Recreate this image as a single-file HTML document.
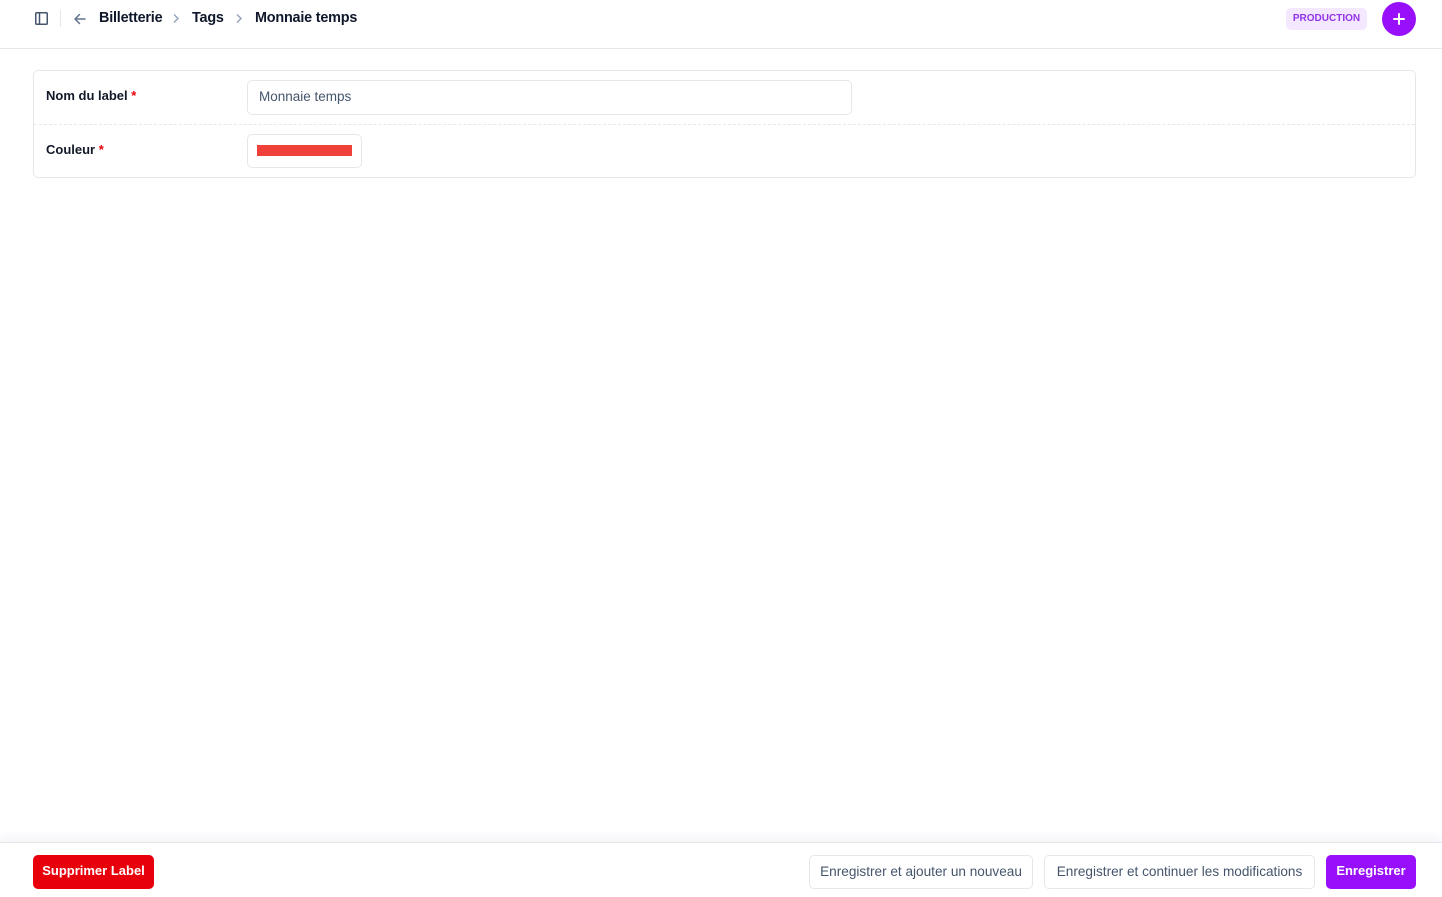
<!DOCTYPE html>
<html><head><meta charset="utf-8"><style>
*{box-sizing:border-box;margin:0;padding:0}
body{width:1442px;height:897px;background:#fff;font-family:"Liberation Sans",sans-serif;position:relative;overflow:hidden;color:#111827}
.top{position:absolute;left:0;top:0;width:1442px;height:49px;border-bottom:1px solid #e5e7eb}
.crumb{position:absolute;top:10px;font-size:14.4px;font-weight:bold;color:#0f172a;letter-spacing:-0.2px}
.chev{position:absolute;top:13px}
.badge{position:absolute;left:1286px;top:8px;width:81px;height:22px;border-radius:5px;background:#f3e8ff;color:#9333ea;font-size:10px;font-weight:bold;text-align:center;line-height:22px}
.plus{position:absolute;left:1382px;top:2px;width:34px;height:34px;border-radius:50%;background:#9810fa}
.card{position:absolute;left:33px;top:70px;width:1383px;height:108px;border:1px solid #e5e7eb;border-radius:5px}
.lbl{position:absolute;left:12px;font-size:13px;font-weight:bold;color:#111827}
.lbl span{color:#e7000b}
.inp{position:absolute;left:213px;top:9px;width:605px;height:35px;border:1px solid #e5e7eb;border-radius:5px;font-size:13.5px;color:#45556c;padding:8px 11px}
.sw{position:absolute;left:213px;top:63px;width:115px;height:34px;border:1px solid #e5e7eb;border-radius:5px}
.sw i{position:absolute;left:9px;top:10px;width:95px;height:11px;background:#f0403a}
.foot{position:absolute;left:0;top:842px;width:1442px;height:55px;border-top:1px solid #e5e7eb;box-shadow:0 -6px 8px rgba(230,232,240,.4)}
.btn{position:absolute;top:12px;height:34px;border-radius:5px;font-size:13px;line-height:32px;text-align:center}
.o{border:1px solid #e5e7eb;color:#45556c;background:#fff;font-size:13.6px}
</style></head><body>
<div class="top">
<svg style="position:absolute;left:35px;top:12px" width="13" height="13" viewBox="0 0 13 13"><rect x="0.75" y="0.75" width="11.5" height="11.5" rx="1" fill="none" stroke="#45556c" stroke-width="1.5"/><line x1="4.5" y1="1" x2="4.5" y2="12" stroke="#45556c" stroke-width="1.5"/></svg>
<div style="position:absolute;left:60px;top:10px;width:1px;height:17px;background:#e5e7eb"></div>
<svg style="position:absolute;left:73px;top:12px" width="14" height="14" viewBox="0 0 14 14"><path d="M12 7H2M6.5 2.5L2 7l4.5 4.5" fill="none" stroke="#62748e" stroke-width="1.5" stroke-linecap="round" stroke-linejoin="round"/></svg>
<div class="crumb" style="left:99px">Billetterie</div>
<svg class="chev" style="left:172px" width="8" height="11" viewBox="0 0 8 11"><path d="M2 1.5l4 4-4 4" fill="none" stroke="#90a1b9" stroke-width="1.4"/></svg>
<div class="crumb" style="left:192px">Tags</div>
<svg class="chev" style="left:235px" width="8" height="11" viewBox="0 0 8 11"><path d="M2 1.5l4 4-4 4" fill="none" stroke="#90a1b9" stroke-width="1.4"/></svg>
<div class="crumb" style="left:255px">Monnaie temps</div>
<div class="badge">PRODUCTION</div>
<div class="plus"><svg style="position:absolute;left:11px;top:11px" width="12" height="12" viewBox="0 0 12 12"><path d="M6 1v10M1 6h10" stroke="#fff" stroke-width="2" stroke-linecap="round"/></svg></div>
</div>
<div class="card">
<div class="lbl" style="top:17px">Nom du label <span>*</span></div>
<div class="inp">Monnaie temps</div>
<div style="position:absolute;left:0;top:53px;width:100%;border-top:1px dashed #e5e7eb"></div>
<div class="lbl" style="top:71px">Couleur <span>*</span></div>
<div class="sw"><i></i></div>
</div>
<div class="foot">
<div class="btn" style="left:33px;width:121px;background:#e7000b;color:#fff;font-weight:bold">Supprimer Label</div>
<div class="btn o" style="left:809px;width:224px">Enregistrer et ajouter un nouveau</div>
<div class="btn o" style="left:1044px;width:271px">Enregistrer et continuer les modifications</div>
<div class="btn" style="left:1326px;width:90px;background:#9810fa;color:#fff;font-weight:bold">Enregistrer</div>
</div>
</body></html>
